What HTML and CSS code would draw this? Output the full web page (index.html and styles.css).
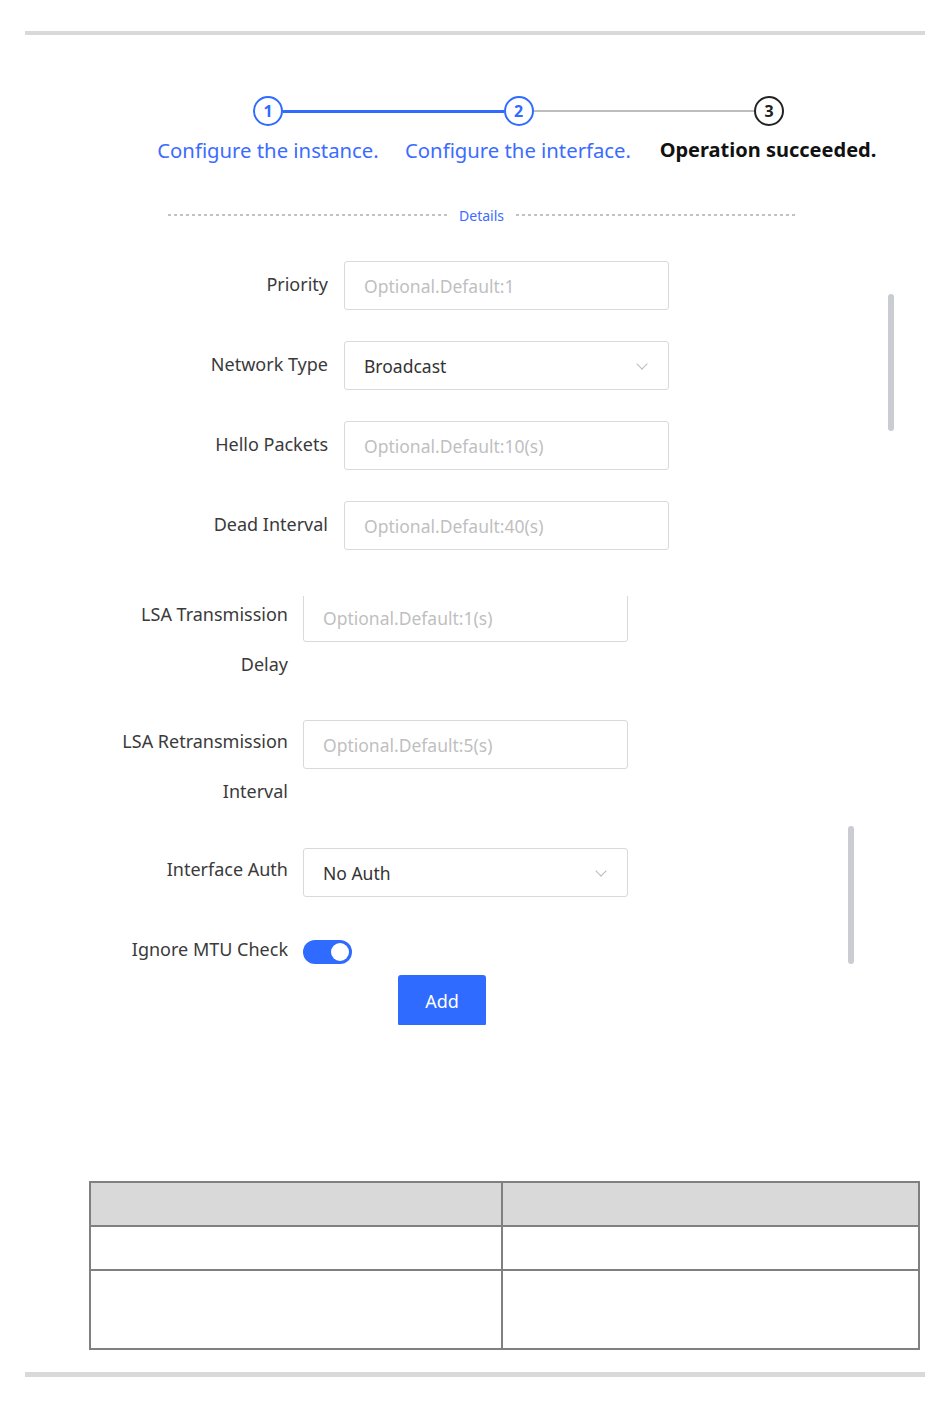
FILE: index.html
```html
<!DOCTYPE html>
<html lang="en">
<head>
    <meta charset="UTF-8">
    <title>OSPF - Configure the interface</title>
    <link rel="stylesheet" href="styles.css">
</head>
<body>

    <div class="rule rule-top"></div>

    <section class="steps">
        <div class="track">
            <span class="dot done">1</span>
            <span class="line done"></span>
            <span class="dot done">2</span>
            <span class="line"></span>
            <span class="dot">3</span>
        </div>
        <div class="step-labels">
            <span class="done">Configure the instance.</span>
            <span class="done">Configure the interface.</span>
            <span class="current">Operation succeeded.</span>
        </div>
    </section>

    <div class="divider">
        <span class="dash"></span>
        <span class="divider-text">Details</span>
        <span class="dash"></span>
    </div>

    <section class="panel panel-a">
        <div class="row">
            <label>Priority</label>
            <div class="field placeholder">Optional.Default:1</div>
        </div>
        <div class="row">
            <label>Network Type</label>
            <div class="field select">Broadcast <span class="chevron"></span></div>
        </div>
        <div class="row">
            <label>Hello Packets</label>
            <div class="field placeholder">Optional.Default:10(s)</div>
        </div>
        <div class="row">
            <label>Dead Interval</label>
            <div class="field placeholder">Optional.Default:40(s)</div>
        </div>
        <div class="scrollbar scrollbar-a"></div>
    </section>

    <section class="panel panel-b">
        <div class="row first">
            <label>LSA Transmission Delay</label>
            <div class="field placeholder">Optional.Default:1(s)</div>
        </div>
        <div class="row second">
            <label>LSA Retransmission Interval</label>
            <div class="field placeholder">Optional.Default:5(s)</div>
        </div>
        <div class="row">
            <label>Interface Auth</label>
            <div class="field select">No Auth <span class="chevron"></span></div>
        </div>
        <div class="row switch-row">
            <label>Ignore MTU Check</label>
            <span class="switch"><span class="knob"></span></span>
        </div>
        <div class="actions">
            <button type="button">Add</button>
        </div>
        <div class="scrollbar scrollbar-b"></div>
    </section>

    <table class="grid">
        <thead>
            <tr><th></th><th></th></tr>
        </thead>
        <tbody>
            <tr class="short"><td></td><td></td></tr>
            <tr class="tall"><td></td><td></td></tr>
        </tbody>
    </table>

    <div class="rule rule-bottom"></div>

</body>
</html>
```

FILE: styles.css
```css
body {
    margin: 0;
    width: 950px;
    font-family: 'Noto Sans', 'Open Sans', sans-serif;
    background: #fff;
    color: #333;
}

.rule {
    height: 4px;
    margin: 0 25px;
    background: #d9d9d9;
}

.rule-top {
    margin-top: 31px;
}

.rule-bottom {
    margin-top: 22px;
    height: 5px;
}

/* steps */
.steps {
    padding-top: 61px;
}

.track {
    display: flex;
    align-items: center;
    margin-left: 253px;
    width: 531px;
}

.dot {
    box-sizing: border-box;
    width: 30px;
    height: 30px;
    border-radius: 50%;
    border: 2px solid #222;
    display: flex;
    align-items: center;
    justify-content: center;
    font-size: 16px;
    font-weight: bold;
    color: #222;
    flex-shrink: 0;
}

.dot.done {
    border-color: #2f6bff;
    color: #2f6bff;
}

.line {
    flex: 1;
    height: 2px;
    background: #bdbdbd;
}

.line.done {
    height: 3px;
    background: #2f6bff;
}

.step-labels {
    display: grid;
    grid-template-columns: repeat(3, 250px);
    margin-left: 143px;
    margin-top: 11px;
    font-size: 20.3px;
    line-height: 26px;
    text-align: center;
    white-space: nowrap;
}

.step-labels .done {
    color: #3c6cff;
}

.step-labels .current {
    color: #111;
    font-weight: bold;
    font-size: 20px;
}

/* divider */
.divider {
    display: flex;
    align-items: center;
    gap: 12px;
    margin: 42px 0 0 168px;
    width: 627px;
    height: 20px;
}

.dash {
    flex: 1;
    height: 2px;
    background: repeating-linear-gradient(to right, #c2c2c2 0 3px, transparent 3px 6px);
}

.divider-text {
    color: #3c6cff;
    font-size: 14px;
}

/* form panels */
.panel {
    position: relative;
}

.row {
    display: flex;
    align-items: center;
    gap: 16px;
}

.row label {
    width: 188px;
    text-align: right;
    font-size: 18px;
    color: #3a3a3a;
}

.field {
    box-sizing: border-box;
    width: 325px;
    height: 49px;
    border: 1px solid #d9d9d9;
    border-radius: 3px;
    padding: 0 19px;
    display: flex;
    align-items: center;
    font-size: 17.5px;
    color: #333;
}

.placeholder {
    color: #bfbfbf;
}

.select {
    justify-content: space-between;
}

.chevron {
    width: 7px;
    height: 7px;
    border-right: 1px solid #bbb;
    border-bottom: 1px solid #bbb;
    transform: rotate(45deg);
    margin: -4px 3px 0 0;
}

.panel-a {
    padding: 36px 0 0 140px;
    height: 335px;
}

.panel-a .row {
    margin-bottom: 31px;
}

.panel-a .row label {
    margin-top: -4px;
}

.panel-b {
    padding-left: 120px;
    height: 429px;
    overflow: hidden;
}

.panel-b .row {
    align-items: flex-start;
    margin-bottom: 28px;
    gap: 15px;
}

.panel-b .row label {
    width: 168px;
    line-height: 50px;
    margin-top: -1px;
}

.panel-b .row.first {
    margin-top: -6px;
}

.panel-b .row.second {
    margin-bottom: 29px;
}

.panel-b .field {
    margin-top: 3px;
}

.panel-b .switch-row {
    margin-bottom: 0;
}

.switch {
    position: relative;
    width: 49px;
    height: 24px;
    margin-top: 15px;
    border-radius: 12px;
    background: #2f6bff;
}

.knob {
    position: absolute;
    top: 3px;
    right: 3px;
    width: 18px;
    height: 18px;
    border-radius: 50%;
    background: #fff;
}

.actions {
    padding-left: 278px;
    margin-top: 1px;
}

.actions button {
    width: 88px;
    height: 51px;
    border: none;
    border-radius: 3px;
    background: #2f6bff;
    color: #fff;
    font-family: inherit;
    font-size: 18px;
}

.scrollbar {
    position: absolute;
    width: 6px;
    border-radius: 3px;
    background: #c9ccd1;
}

.scrollbar-a {
    left: 888px;
    top: 69px;
    height: 137px;
}

.scrollbar-b {
    left: 848px;
    top: 230px;
    height: 138px;
}

/* table */
.grid {
    margin: 156px 0 0 89px;
    width: 831px;
    border-collapse: collapse;
    border: 2px solid #808080;
}

.grid th,
.grid td {
    border: 2px solid #808080;
    padding: 0;
}

.grid th {
    background: #d9d9d9;
    height: 42px;
}

.grid th:first-child,
.grid td:first-child {
    width: 410px;
}

.grid .short td {
    height: 42px;
}

.grid .tall td {
    height: 77px;
}
```
